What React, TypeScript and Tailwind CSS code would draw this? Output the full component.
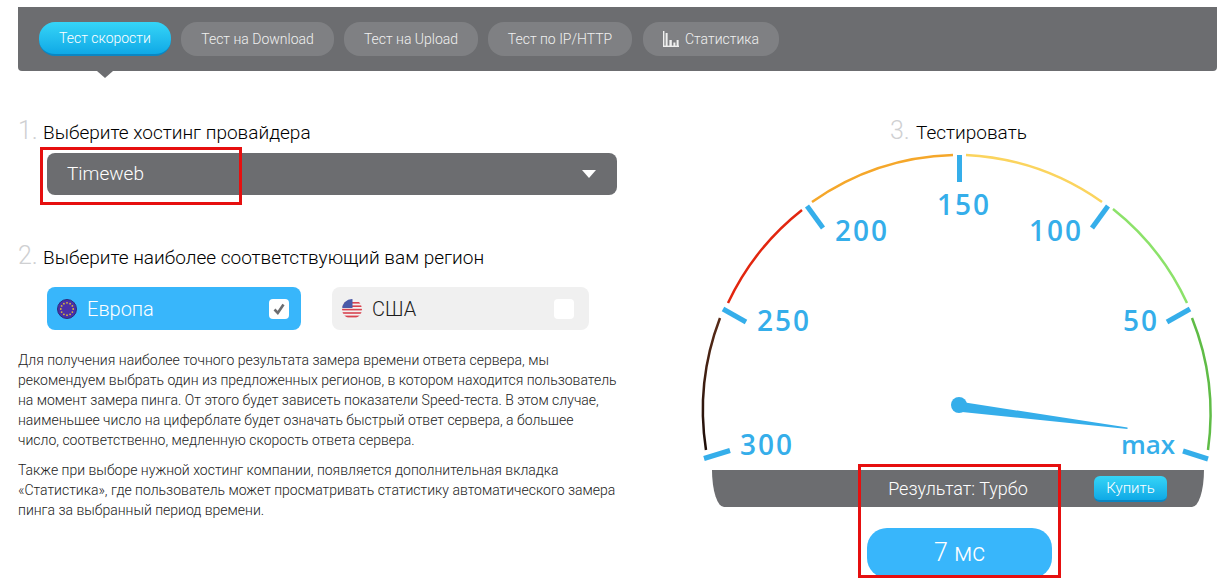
const tabs = ["Тест на Download", "Тест на Upload", "Тест по IP/HTTP"];

const Heading = ({ num, text, numWidth = "w-[25px]" }: { num: string; text: string; numWidth?: string }) => (
  <div className="flex items-baseline h-7">
    <span className={`${numWidth} text-[25px] leading-7 font-light text-[#cfd0d2]`}>{num}</span>
    <span className="text-[19px] leading-7 font-light text-black">{text}</span>
  </div>
);

const EuFlag = () => {
  const dots = [0, 30, 60, 90, 120, 150, 180, 210, 240, 270, 300, 330];
  return (
    <svg width="20" height="20" viewBox="0 0 20 20" className="shrink-0">
      <circle cx="10" cy="10" r="9.5" fill="#4a2fa8" stroke="#2c2a7a" strokeWidth="1" />
      {dots.map((a) => (
        <circle
          key={a}
          cx={10 + 6.2 * Math.cos((a * Math.PI) / 180)}
          cy={10 + 6.2 * Math.sin((a * Math.PI) / 180)}
          r="0.9"
          fill="#d9b93a"
        />
      ))}
    </svg>
  );
};

const UsFlag = () => (
  <svg width="20" height="20" viewBox="0 0 20 20" className="shrink-0">
    <defs>
      <clipPath id="usa">
        <circle cx="10" cy="10" r="10" />
      </clipPath>
    </defs>
    <g clipPath="url(#usa)">
      <rect width="20" height="20" fill="#f4f1f1" />
      <rect y="3" width="20" height="1.6" fill="#d8434f" />
      <rect y="6.4" width="20" height="1.6" fill="#d8434f" />
      <rect y="9.8" width="20" height="1.6" fill="#d8434f" />
      <rect y="13.2" width="20" height="1.6" fill="#d8434f" />
      <rect y="16.6" width="20" height="1.8" fill="#d8434f" />
      <rect width="10.5" height="9" fill="#4a5aa8" />
    </g>
  </svg>
);

const Gauge = () => (
  <svg width="535" height="325" viewBox="690 145 535 325" className="block">
    <defs>
      <linearGradient id="dark" x1="0" y1="0" x2="0" y2="1">
        <stop offset="0" stopColor="#5a2c18" />
        <stop offset="1" stopColor="#1d0d08" />
      </linearGradient>
    </defs>
    <g fill="none" strokeWidth="2.5">
      <path d="M706 450 A258 258 0 0 1 720 318" stroke="url(#dark)" />
      <path d="M728 303 A258 258 0 0 1 802 210" stroke="#e2260f" />
      <path d="M812 202 A258 258 0 0 1 953 155" stroke="#f5a72a" />
      <path d="M966 155 A258 258 0 0 1 1102 202" stroke="#fbd45e" />
      <path d="M1113 209 A258 258 0 0 1 1187 303" stroke="#8ce26a" />
      <path d="M1192 318 A258 258 0 0 1 1208 450" stroke="#5fbc46" />
    </g>
    <g stroke="#35aeea" strokeWidth="5">
      <line x1="704" y1="458.5" x2="730" y2="450.5" />
      <line x1="723" y1="309" x2="746" y2="322" />
      <line x1="807" y1="206" x2="823" y2="228" />
      <line x1="959.5" y1="155" x2="959.5" y2="182" />
      <line x1="1108" y1="206" x2="1092" y2="228" />
      <line x1="1190" y1="309" x2="1167" y2="322" />
      <line x1="1208" y1="459" x2="1183" y2="451" />
    </g>
    <g fill="#35aeea" fontFamily="'Open Sans', sans-serif" fontWeight="600" fontSize="28" letterSpacing="2">
      <text x="964" y="215" textAnchor="middle">150</text>
      <text x="862" y="241" textAnchor="middle">200</text>
      <text x="1056" y="241" textAnchor="middle">100</text>
      <text x="784" y="331" textAnchor="middle">250</text>
      <text x="1141" y="331" textAnchor="middle">50</text>
      <text x="767" y="455" textAnchor="middle">300</text>
      <text x="1148" y="454" textAnchor="middle" fontSize="26" letterSpacing="0">max</text>
    </g>
    <polygon points="962,402 1127.5,427.6 1127.5,429 962,412" fill="#35aeea" />
    <circle cx="959" cy="405" r="8" fill="#35aeea" />
  </svg>
);

export default function App() {
  return (
    <div className="relative h-[582px] w-[1225px] overflow-hidden bg-white font-[Roboto,sans-serif]">
      {/* NAV */}
      <div className="pl-[18px] pr-2 pt-[7px]">
        <div className="relative flex h-16 items-center gap-2.5 rounded-b-[4px] bg-[#6c6d70] pl-[21px]">
          <button className="h-[34px] w-[132px] rounded-2xl border-b-2 border-[#0b86c2] bg-gradient-to-b from-[#35d5f7] to-[#0ea9e6] text-[14px] font-light text-white">
            Тест скорости
          </button>
          {tabs.map((t, i) => (
            <button
              key={t}
              className={`h-[34px] rounded-2xl bg-[#7f8083] text-[14px] font-light text-[#f0f0f0] ${
                i === 0 ? "w-[153px]" : i === 1 ? "w-[134px]" : "w-[144px]"
              }`}
            >
              {t}
            </button>
          ))}
          <button className="ml-px flex h-[34px] w-[136px] items-center justify-center gap-1.5 rounded-2xl bg-[#7f8083] text-[14px] font-light text-[#f0f0f0]">
            <svg width="16" height="16" viewBox="0 0 16 16" fill="#f0f0f0">
              <rect x="0" y="0" width="1.4" height="16" />
              <rect x="0" y="14.6" width="16" height="1.4" />
              <rect x="2.6" y="2" width="2" height="13" />
              <rect x="6.4" y="9" width="2.4" height="6" />
              <rect x="10.4" y="11.5" width="2" height="3.5" />
              <rect x="13.6" y="9" width="2" height="6" />
            </svg>
            Статистика
          </button>
          <div className="absolute left-[79px] top-full h-0 w-0 border-x-[8px] border-t-[7px] border-x-transparent border-t-[#6c6d70]" />
        </div>
      </div>

      <div className="flex">
        {/* LEFT */}
        <div className="w-[672px] shrink-0 pl-[18px] pt-[46px]">
          <Heading num="1." text="Выберите хостинг провайдера" />
          <div className="ml-[29px] mt-2 flex h-[42px] w-[570px] items-center justify-between rounded-lg bg-[#6c6d70] pl-5 pr-[21px] text-[19px] font-light text-white">
            <span className="pt-px">Timeweb</span>
            <div className="h-0 w-0 border-x-[7px] border-t-[8px] border-x-transparent border-t-white" />
          </div>

          <div className="mt-[47px]">
            <Heading num="2." text="Выберите наиболее соответствующий вам регион" />
          </div>
          <div className="ml-[29px] mt-[17px] flex gap-[31px]">
            <div className="flex h-[43px] w-[254px] items-center rounded-lg bg-[#38b6fb] pl-2.5 pr-3 text-[20px] font-light text-white">
              <EuFlag />
              <span className="ml-2.5 flex-1">Европа</span>
              <div className="flex h-5 w-5 items-center justify-center rounded-[4px] bg-white">
                <svg width="14" height="14" viewBox="0 0 14 14" fill="none" stroke="#6c6d70" strokeWidth="2.6">
                  <path d="M2.5 7.5 L5.8 11 L11.5 2.5" />
                </svg>
              </div>
            </div>
            <div className="flex h-[43px] w-[257px] items-center rounded-lg bg-[#f0f0f0] pl-2.5 pr-[15px] text-[20px] font-light text-[#1c1c1c]">
              <UsFlag />
              <span className="ml-2.5 flex-1">США</span>
              <div className="h-5 w-5 rounded-[4px] bg-white" />
            </div>
          </div>

          <div className="mt-5 w-[599px] text-[14px] font-light leading-5 text-[#222222]">
            <p>
              Для получения наиболее точного результата замера времени ответа сервера, мы рекомендуем выбрать один из
              предложенных регионов, в котором находится пользователь на момент замера пинга. От этого будет зависеть
              показатели Speed-теста. В этом случае, наименьшее число на циферблате будет означать быстрый ответ
              сервера, а большее число, соответственно, медленную скорость ответа сервера.
            </p>
            <p className="mt-2.5">
              Также при выборе нужной хостинг компании, появляется дополнительная вкладка «Статистика», где пользователь
              может просматривать статистику автоматического замера пинга за выбранный период времени.
            </p>
          </div>
        </div>

        {/* RIGHT */}
        <div className="w-[553px] shrink-0 pl-[18px] pt-[46px]">
          <div className="pl-[200px]">
            <Heading num="3." text="Тестировать" numWidth="w-[26px]" />
          </div>
          <Gauge />
          <div className="relative ml-[22px] flex h-[37px] w-[492px] items-center justify-center bg-[#6c6d70] text-[18px] font-light text-white [border-radius:0_0_12px_12px/0_0_37px_37px]">
            Результат: Турбо
            <button className="absolute left-[382px] top-[6px] h-[26px] w-[73px] rounded-md border-b-2 border-[#0b86c2] bg-gradient-to-b from-[#35d5f7] to-[#0ea9e6] text-[15px] font-light text-white">
              Купить
            </button>
          </div>
          <div className="ml-[177px] mt-[21px] flex h-[50px] w-[185px] items-center justify-center rounded-[20px] bg-[#38b6fb] text-[25px] font-light text-white">
            7 мс
          </div>
        </div>
      </div>

      {/* RED MARKS */}
      <div className="absolute left-[40px] top-[147px] h-[58px] w-[202px] border-[3px] border-[#e60f0f]" />
      <div className="absolute left-[858px] top-[464px] h-[114px] w-[203px] border-[3px] border-[#e60f0f]" />
    </div>
  );
}
